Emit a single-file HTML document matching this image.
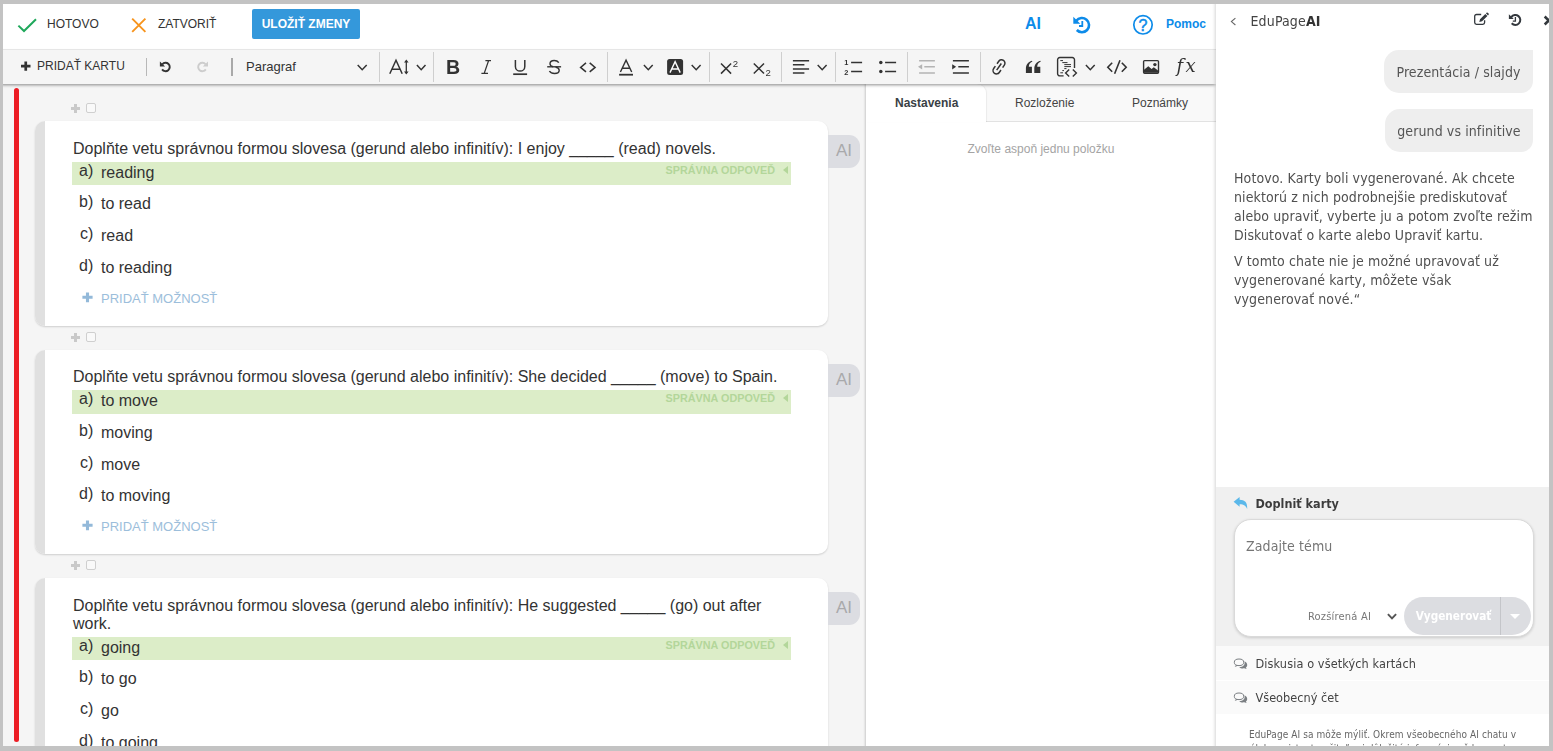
<!DOCTYPE html>
<html lang="sk">
<head>
<meta charset="utf-8">
<title>EduPage – karty</title>
<style>
html,body{margin:0;padding:0;}
body{width:1553px;height:751px;overflow:hidden;background:#fff;font-family:"Liberation Sans",sans-serif;color:#333;}
#frame{position:relative;width:1553px;height:751px;overflow:hidden;background:#fff;}
.abs{position:absolute;}
.bd{position:absolute;background:#c3c3c3;z-index:100;}
/* top bar */
#topbar{position:absolute;left:0;top:0;width:1216px;height:49px;background:#fff;}
.tbtxt{position:absolute;font-size:12px;line-height:14px;color:#333;white-space:nowrap;}
#save{position:absolute;left:252px;top:9px;width:108px;height:30px;background:#3498db;border-radius:2px;color:#fff;font-weight:bold;font-size:12px;line-height:30px;text-align:center;white-space:nowrap;}
/* toolbar */
#toolbar{position:absolute;left:0;top:49px;width:1216px;height:35px;background:#f5f5f5;border-top:1px solid #e6e6e6;box-sizing:border-box;box-shadow:0 2px 3px -1px rgba(0,0,0,.45);z-index:5;}
.sep{position:absolute;width:1px;background:#cfcfcf;top:52px;height:30px;z-index:6;}
.sep.s{top:58px;height:18px;background:#b8b8b8;}
.ico{position:absolute;z-index:6;overflow:visible;}
/* cards area */
#cards{position:absolute;left:0;top:84px;width:866px;height:667px;background:#f5f5f5;}
#redline{position:absolute;left:14px;top:88px;width:5px;height:654px;border-radius:3px;background:#ec1c24;}
.card{position:absolute;left:35px;width:793px;height:204.5px;background:#fff;border-radius:10px;box-shadow:0 1px 2px rgba(0,0,0,.16);}
.card .handle{position:absolute;left:0;top:0;width:10px;height:100%;background:#e0e0e0;border-radius:10px 0 0 10px;}
.card .q{position:absolute;left:38px;top:18.7px;width:720px;font-size:16px;line-height:18.2px;color:#333;}
.row{position:absolute;left:37px;width:719px;height:23px;}
.row.ok{background:#dcedc8;}
.row .lb{position:absolute;left:0;width:21.3px;text-align:right;top:0px;font-size:16px;line-height:18px;white-space:nowrap;}
.row .tx{position:absolute;left:29px;top:2px;font-size:16px;line-height:18px;white-space:nowrap;}
.row .sp{position:absolute;right:16px;top:2px;font-size:10.8px;line-height:13px;font-weight:bold;color:#b3d69a;white-space:nowrap;}
.row .tri{position:absolute;right:3px;top:4px;width:0;height:0;border-top:4px solid transparent;border-bottom:4px solid transparent;border-right:5.5px solid #b3d69a;}
.addopt{position:absolute;left:66px;font-size:13px;line-height:15px;color:#9cbedb;white-space:nowrap;}
.aitab{position:absolute;left:828px;width:32px;height:33px;background:#dcdde2;border-radius:0 11px 11px 0;color:#a9a9ab;font-size:17px;line-height:32px;text-align:center;}
.plus{position:absolute;left:71px;width:9px;height:9px;}
.plus:before{content:"";position:absolute;left:0;top:3px;width:9px;height:3px;background:#c9c9c9;}
.plus:after{content:"";position:absolute;left:3px;top:0;width:3px;height:9px;background:#c9c9c9;}
.cbx{position:absolute;left:86px;width:8px;height:8px;border:1px solid #cfcfcf;border-radius:2px;background:#f9f9f9;}
/* settings panel */
#settings{position:absolute;left:866px;top:84px;width:350px;height:667px;background:#fff;box-shadow:-1px 0 2px rgba(0,0,0,.18);}
#tabbar{position:absolute;left:0;top:0;width:350px;height:37px;background:#f9f9f9;border-bottom:1px solid #e2e2e2;}
#tab1{position:absolute;left:0;top:0;width:120px;height:38px;background:#fff;border-radius:0 9px 0 0;box-shadow:1px 0 1px rgba(0,0,0,.06);}
.tabt{position:absolute;top:12px;font-size:12px;line-height:14px;color:#444;white-space:nowrap;}
/* AI panel */
#ai{position:absolute;left:1216px;top:0;width:337px;height:751px;background:#fff;box-shadow:-1px 0 3px rgba(0,0,0,.17);z-index:10;font-family:"DejaVu Sans Condensed","DejaVu Sans","Liberation Sans",sans-serif;color:#555;}
#ai .t{position:absolute;white-space:nowrap;filter:grayscale(1);}
.bubble{filter:grayscale(1);position:absolute;background:#eee;border-radius:15px 0 12px 15px;font-size:14px;letter-spacing:.1px;color:#555;white-space:nowrap;text-align:center;}
</style>
</head>
<body>
<div id="frame">
<!-- frame borders -->
<div class="bd" style="left:0;top:0;width:1553px;height:4px"></div>
<div class="bd" style="left:0;top:0;width:3px;height:751px"></div>
<div class="bd" style="left:1549px;top:0;width:4px;height:751px"></div>
<div class="bd" style="left:0;top:746px;width:1553px;height:5px"></div>

<div id="topbar">
<svg class="ico" style="left:16px;top:16px" width="24" height="18" viewBox="0 0 24 18"><polyline points="2.4,9.6 8,15 20,3.2" fill="none" stroke="#1fa85b" stroke-width="2"/></svg>
<div class="tbtxt" style="left:47px;top:17px">HOTOVO</div>
<svg class="ico" style="left:130px;top:16px" width="18" height="18" viewBox="0 0 18 18"><path d="M2.2 2.6 L15.4 15.8 M15.4 2.6 L2.2 15.8" fill="none" stroke="#f7941d" stroke-width="1.9"/></svg>
<div class="tbtxt" style="left:158px;top:17px">ZATVORIŤ</div>
<div id="save">ULOŽIŤ ZMENY</div>
<div class="tbtxt" style="left:1025px;top:15.2px;font-size:16px;line-height:18px;font-weight:bold;color:#0d8be9">AI</div>
<svg class="ico" style="left:1072px;top:15px" width="20" height="20" viewBox="0 0 20 20"><path d="M4.3 5.8 A7.1 7.1 0 1 1 4.8 15" fill="none" stroke="#0d8be9" stroke-width="2.6"/><path d="M1.3 1.8 L1.3 8.8 L8.3 8.8 Z" fill="#0d8be9"/><path d="M10.3 6 V11 H7" fill="none" stroke="#0d8be9" stroke-width="1.8"/></svg>
<svg class="ico" style="left:1132px;top:14px" width="22" height="22" viewBox="0 0 22 22"><circle cx="11" cy="10.8" r="9.2" fill="none" stroke="#0d8be9" stroke-width="1.7"/><text x="11" y="16.5" text-anchor="middle" font-family="Liberation Sans, sans-serif" font-size="16" fill="#0d8be9" stroke="#0d8be9" stroke-width="0.5">?</text></svg>
<div class="tbtxt" style="left:1166px;top:17px;font-weight:bold;color:#0d8be9">Pomoc</div>
</div>
<div id="toolbar"></div>
<div class="sep s" style="left:146px"></div>
<div class="sep s" style="left:231px;width:2px;background:#a9a9a9"></div>
<div class="sep" style="left:379px"></div>
<div class="sep" style="left:433px"></div>
<div class="sep" style="left:607px"></div>
<div class="sep" style="left:709px"></div>
<div class="sep" style="left:781px"></div>
<div class="sep" style="left:835px"></div>
<div class="sep" style="left:907px"></div>
<div class="sep" style="left:980px"></div>
<div class="tbtxt" style="left:37px;top:59px;z-index:6">PRIDAŤ KARTU</div>
<div class="tbtxt" style="left:246px;top:58.6px;font-size:13px;line-height:16px;z-index:6">Paragraf</div>
<svg class="ico" style="left:0;top:49px;filter:grayscale(1)" width="1216" height="36" viewBox="0 49 1216 36">
<path d="M25.75 61.5 V70.8 M21 66.15 H30.5" stroke="#2f3338" stroke-width="2.7" fill="none"/>
<path d="M162.3 64.3 A4.2 4.2 0 1 1 162.1 69.4" fill="none" stroke="#2f3338" stroke-width="1.9"/><path d="M159.9 61.4 V66.6 H165.1 Z" fill="#2f3338"/>
<path d="M205.6 64.3 A4.2 4.2 0 1 0 205.8 69.4" fill="none" stroke="#cdcdcd" stroke-width="1.9"/><path d="M208 61.4 V66.6 H202.8 Z" fill="#cdcdcd"/>
<polyline points="357.7,65.1 362.2,69.7 366.7,65.1" fill="none" stroke="#333" stroke-width="1.5"/>
<polyline points="416.9,65.1 421.2,69.7 425.5,65.1" fill="none" stroke="#333" stroke-width="1.5"/>
<polyline points="643.9,65.1 648.3,69.7 652.7,65.1" fill="none" stroke="#333" stroke-width="1.5"/>
<polyline points="691.7,65.1 696.2,69.7 700.6,65.1" fill="none" stroke="#333" stroke-width="1.5"/>
<polyline points="817.7,65.1 822.2,69.7 826.6,65.1" fill="none" stroke="#333" stroke-width="1.5"/>
<polyline points="1085.9,65.1 1090.3,69.7 1094.7,65.1" fill="none" stroke="#333" stroke-width="1.5"/>
<path d="M389.8 73.7 L396 60.3 L402.2 73.7 M391.9 69.2 H400.1" fill="none" stroke="#333" stroke-width="1.5"/>
<path d="M406.3 61 V73.3" stroke="#333" stroke-width="1.3" fill="none"/><path d="M404 62.6 L406.3 59.6 L408.6 62.6 Z M404 71.6 L406.3 74.6 L408.6 71.6 Z" fill="#333"/>
<text x="446" y="74" font-family="Liberation Sans, sans-serif" font-weight="bold" font-size="19.6" fill="#333">B</text>
<path d="M488.6 60.6 L484.2 73.4 M485.4 60.6 H491 M481.4 73.4 H488" fill="none" stroke="#333" stroke-width="1.3"/>
<path d="M515.4 60 V66.4 A4.7 4.7 0 0 0 524.8 66.4 V60" fill="none" stroke="#333" stroke-width="1.5"/><path d="M513.2 74.2 H527.1" stroke="#333" stroke-width="1.7"/>
<path d="M558.8 62.6 C557.6 60.9 555.9 60.5 554.2 60.5 C551.6 60.5 550 61.9 550 63.8 C550 65.4 551 66.3 553 66.8 M555.6 67 C558 67.7 559.2 68.6 559.2 70.3 C559.2 72.3 557.4 73.5 554.6 73.5 C552.4 73.5 550.4 72.7 549.4 71" fill="none" stroke="#333" stroke-width="1.4"/><path d="M547.2 66.8 H561.1" stroke="#333" stroke-width="1.4"/>
<path d="M586 62.9 L580.6 67.4 L586 71.9 M589.7 62.9 L595.1 67.4 L589.7 71.9" fill="none" stroke="#333" stroke-width="1.5"/>
<path d="M620.4 72 L626.05 60.2 L631.7 72 M622.4 68.2 H629.7" fill="none" stroke="#333" stroke-width="1.4"/><path d="M619.1 74.7 H633" stroke="#333" stroke-width="1.8"/>
<rect x="667.1" y="58.9" width="16" height="16.1" rx="2.5" fill="#333"/><path d="M670 72.6 L675.1 61.6 L680.2 72.6 M671.8 69 H678.4" fill="none" stroke="#fff" stroke-width="1.4"/>
<path d="M721 63.5 L731.1 73.6 M731.1 63.5 L721 73.6" stroke="#333" stroke-width="1.5"/><text x="732.8" y="66.9" font-family="Liberation Sans, sans-serif" font-size="9.6" fill="#333">2</text>
<path d="M753.8 63.5 L764 73.5 M764 63.5 L753.8 73.5" stroke="#333" stroke-width="1.5"/><text x="765.4" y="76.2" font-family="Liberation Sans, sans-serif" font-size="9.6" fill="#333">2</text>
<path d="M792.9 60.7 H809.1 M792.9 64.8 H804.4 M792.9 68.9 H809.1 M792.9 73 H804.4" stroke="#333" stroke-width="1.5"/>
<text x="844.2" y="65" font-family="Liberation Sans, sans-serif" font-weight="bold" font-size="7.4" fill="#333">1</text><text x="844.2" y="74.9" font-family="Liberation Sans, sans-serif" font-weight="bold" font-size="7.4" fill="#333">2</text><path d="M851.1 62.5 H862.1 M851.1 71.4 H862.1" stroke="#333" stroke-width="1.5"/>
<circle cx="880.8" cy="62.5" r="1.75" fill="#333"/><circle cx="880.8" cy="71.4" r="1.75" fill="#333"/><path d="M885.1 62.5 H896.1 M885.1 71.4 H896.1" stroke="#333" stroke-width="1.5"/>
<path d="M919.1 60.7 H934.9 M924.3 66.8 H934.9 M919.1 73 H934.9" stroke="#b4b4b4" stroke-width="1.5"/><path d="M918 66.8 L922.2 64.2 V69.4 Z" fill="#b4b4b4"/>
<path d="M952.9 60.7 H968.9 M958.3 66.8 H968.9 M952.9 73 H968.9" stroke="#333" stroke-width="1.5"/><path d="M956.1 66.8 L952.2 64.2 V69.4 Z" fill="#333"/>
<g transform="rotate(35 999 66.85)" fill="none" stroke="#333" stroke-width="1.5"><path d="M995.6 65.4 V62.4 A3.4 3.4 0 0 1 1002.4 62.4 V65.4 M995.6 68.3 V71.3 A3.4 3.4 0 0 0 1002.4 71.3 V68.3 M999 62.8 V70.9"/></g>
<path d="M1025.9 73 h6 v-6.2 h-3.1 c0.1 -2.6 1.2 -4.2 3.6 -5.3 l-0.5 -0.7 c-3.9 1.2 -6 4 -6 8 z M1034.3 73 h6 v-6.2 h-3.1 c0.1 -2.6 1.2 -4.2 3.6 -5.3 l-0.5 -0.7 c-3.9 1.2 -6 4 -6 8 z" fill="#333"/>
<path d="M1063.6 75.9 H1059.8 A2.2 2.2 0 0 1 1057.6 73.7 V59.7 A2.2 2.2 0 0 1 1059.8 57.5 H1072.3 A2.2 2.2 0 0 1 1074.5 59.7 V68" fill="none" stroke="#333" stroke-width="1.4"/>
<path d="M1060.3 60.6 H1063 M1062.3 62.6 H1067.5 M1064.3 64.6 H1071 M1064.3 66.6 H1071 M1064.3 68.6 H1066.5 M1062.3 70.6 H1064 M1060.3 72.8 H1063" stroke="#333" stroke-width="1"/>
<path d="M1069.2 69.4 L1065.6 72.9 L1069.2 76.4 M1072.8 69.4 L1076.4 72.9 L1072.8 76.4" fill="none" stroke="#333" stroke-width="1.4"/>
<path d="M1112.2 62.7 L1107.8 67.2 L1112.2 71.7 M1120 60.2 L1114.6 73.8 M1121.8 62.7 L1126.2 67.2 L1121.8 71.7" fill="none" stroke="#333" stroke-width="1.6"/>
<rect x="1143.6" y="60.6" width="14.9" height="12.6" rx="1" fill="none" stroke="#333" stroke-width="1.4"/><path d="M1144 72.8 V69.8 L1148.3 66.2 L1151.6 69 L1153.8 67.3 L1158 70.6 V72.8 Z" fill="#333"/><circle cx="1154.9" cy="64.6" r="1.7" fill="#333"/>
<text x="1176.4" y="72.2" font-family="DejaVu Serif, Liberation Serif, serif" font-style="italic" font-size="18" letter-spacing="2.4" fill="#333">fx</text>
</svg>
<div id="cards">
<div id="redline" style="top:4px"></div>
<div class="plus" style="top:19.8px"></div><div class="cbx" style="top:19.2px"></div>
<div class="card" style="top:37.0px"><div class="handle"></div>
<div class="q">Doplňte vetu správnou formou slovesa (gerund alebo infinitív): I enjoy _____ (read) novels.</div>
<div class="row ok" style="top:41.2px"><span class="lb">a)</span><span class="tx">reading</span><span class="sp">SPRÁVNA ODPOVEĎ</span><span class="tri"></span></div>
<div class="row" style="top:72.0px"><span class="lb">b)</span><span class="tx">to read</span></div>
<div class="row" style="top:103.8px"><span class="lb">c)</span><span class="tx">read</span></div>
<div class="row" style="top:135.8px"><span class="lb">d)</span><span class="tx">to reading</span></div>
<div class="addopt" style="left:66px;top:170.1px">PRIDAŤ MOŽNOSŤ</div><svg class="ico" style="left:47px;top:171.3px" width="11" height="11" viewBox="0 0 11 11"><path d="M5.5 0.4 V10.2 M0.4 5.3 H10.6" stroke="#93b9d9" stroke-width="3.1" fill="none"/></svg>
</div>
<div class="aitab" style="top:51.0px">AI</div>
<div class="plus" style="top:248.7px"></div><div class="cbx" style="top:248.2px"></div>
<div class="card" style="top:265.6px"><div class="handle"></div>
<div class="q">Doplňte vetu správnou formou slovesa (gerund alebo infinitív): She decided _____ (move) to Spain.</div>
<div class="row ok" style="top:40.5px;height:23.9px"><span class="lb">a)</span><span class="tx">to move</span><span class="sp">SPRÁVNA ODPOVEĎ</span><span class="tri"></span></div>
<div class="row" style="top:72.0px"><span class="lb">b)</span><span class="tx">moving</span></div>
<div class="row" style="top:104.2px"><span class="lb">c)</span><span class="tx">move</span></div>
<div class="row" style="top:135.8px"><span class="lb">d)</span><span class="tx">to moving</span></div>
<div class="addopt" style="left:66px;top:169.2px">PRIDAŤ MOŽNOSŤ</div><svg class="ico" style="left:47px;top:170.4px" width="11" height="11" viewBox="0 0 11 11"><path d="M5.5 0.4 V10.2 M0.4 5.3 H10.6" stroke="#93b9d9" stroke-width="3.1" fill="none"/></svg>
</div>
<div class="aitab" style="top:279.6px">AI</div>
<div class="plus" style="top:476.7px"></div><div class="cbx" style="top:476.4px"></div>
<div class="card" style="top:494.2px"><div class="handle"></div>
<div class="q">Doplňte vetu správnou formou slovesa (gerund alebo infinitív): He suggested _____ (go) out after<br>work.</div>
<div class="row ok" style="top:58.9px"><span class="lb">a)</span><span class="tx">going</span><span class="sp">SPRÁVNA ODPOVEĎ</span><span class="tri"></span></div>
<div class="row" style="top:89.7px"><span class="lb">b)</span><span class="tx">to go</span></div>
<div class="row" style="top:121.5px"><span class="lb">c)</span><span class="tx">go</span></div>
<div class="row" style="top:153.5px"><span class="lb">d)</span><span class="tx">to going</span></div>
<div class="addopt" style="left:66px;top:188.3px">PRIDAŤ MOŽNOSŤ</div><svg class="ico" style="left:47px;top:189.5px" width="11" height="11" viewBox="0 0 11 11"><path d="M5.5 0.4 V10.2 M0.4 5.3 H10.6" stroke="#93b9d9" stroke-width="3.1" fill="none"/></svg>
</div>
<div class="aitab" style="top:507.8px">AI</div>
</div>
<div id="settings">
<div id="tabbar"></div>
<div id="tab1"></div>
<div class="tabt" style="left:29px;font-weight:bold;color:#3a3f45">Nastavenia</div>
<div class="tabt" style="left:149px">Rozloženie</div>
<div class="tabt" style="left:266px">Poznámky</div>
<div class="tabt" style="left:0;width:350px;text-align:center;top:58px;color:#a4a4a4">Zvoľte aspoň jednu položku</div>
</div>
<div id="ai">
<svg class="ico" style="left:13px;top:16px" width="10" height="12" viewBox="0 0 10 12"><polyline points="6.4,2.2 2.4,5.6 6.4,9" fill="none" stroke="#666" stroke-width="1.1"/></svg>
<div class="t" style="left:34.5px;top:11.8px;font-size:14px;line-height:18px;color:#444;letter-spacing:.15px">EduPage<b style="color:#333">AI</b></div>
<svg class="ico" style="left:257px;top:11.4px" width="17" height="15" viewBox="0 0 17 15"><path d="M8.2 3.5 H3.5 A1.8 1.8 0 0 0 1.7 5.3 V11.5 A1.8 1.8 0 0 0 3.5 13.3 H9.8 A1.8 1.8 0 0 0 11.6 11.5 V9.2" fill="none" stroke="#33383d" stroke-width="1.3"/><path d="M6.3 11 L7 8.2 L12.3 2.9 L14.4 5 L9.1 10.3 Z M12.9 2.3 L13.5 1.7 A0.9 0.9 0 0 1 14.7 1.7 L15.6 2.6 A0.9 0.9 0 0 1 15.6 3.8 L15 4.4 Z" fill="#33383d"/></svg>
<svg class="ico" style="left:291px;top:12px" width="16" height="16" viewBox="0 0 16 16"><path d="M4.3 5.1 A4.95 4.95 0 1 1 4.7 11.3" fill="none" stroke="#33383d" stroke-width="2"/><path d="M1.9 2.2 V7 H6.7 Z" fill="#33383d"/><path d="M8.4 5.1 V9.1 H5.8" fill="none" stroke="#33383d" stroke-width="1.3"/></svg>
<svg class="ico" style="left:326px;top:13px" width="12" height="14" viewBox="0 0 12 14"><path d="M2.7 3.5 L10.7 11.5 M10.7 3.5 L2.7 11.5" stroke="#33383d" stroke-width="2.5" fill="none"/></svg>

<div class="bubble" style="left:168px;top:50px;width:149px;height:43px;line-height:44px">Prezentácia / slajdy</div>
<div class="bubble" style="left:169px;top:109px;width:148px;height:43px;line-height:44px">gerund vs infinitive</div>

<div class="t" style="left:18px;top:169px;font-size:14px;line-height:19px;letter-spacing:.1px;color:#505050">Hotovo. Karty boli vygenerované. Ak chcete<br>niektorú z nich podrobnejšie prediskutovať<br>alebo upraviť, vyberte ju a potom zvoľte režim<br>Diskutovať o karte alebo Upraviť kartu.</div>
<div class="t" style="left:18px;top:252px;font-size:14px;line-height:19px;letter-spacing:.1px;color:#505050">V tomto chate nie je možné upravovať už<br>vygenerované karty, môžete však<br>vygenerovať nové.“</div>

<div class="abs" style="left:0;top:487px;width:337px;height:159px;background:#f0f0f0"></div>
<svg class="ico" style="left:17px;top:496px" width="16" height="14" viewBox="0 0 16 14"><path d="M0.6 5.8 L6.6 0.9 V3.7 C11.6 3.8 14.6 6.2 14.2 12.9 C13 10 11 8.3 6.6 8.2 V10.8 Z" fill="#5bb8ea"/></svg>
<div class="t" style="left:39.5px;top:495px;font-size:12.5px;line-height:18px;font-weight:bold;color:#383d42">Doplniť karty</div>
<div class="abs" style="left:17.5px;top:518.8px;width:298px;height:116.6px;background:#fff;border:1px solid #dadada;border-radius:17px;box-shadow:0 1px 3px rgba(0,0,0,.16)"></div>
<div class="t" style="left:30px;top:537px;font-size:14px;line-height:18px;letter-spacing:.1px;color:#757575">Zadajte tému</div>
<div class="t" style="left:92px;top:609.3px;font-size:11px;line-height:15px;letter-spacing:.2px;color:#777">Rozšírená AI</div>
<svg class="ico" style="left:170px;top:611px" width="12" height="11" viewBox="0 0 12 11"><polyline points="1.9,3.1 6,7.4 10.1,3.1" fill="none" stroke="#555" stroke-width="1.9"/></svg>
<div class="abs" style="left:188px;top:597px;width:127px;height:37.5px;border-radius:19px;background:#dcdde1"></div>
<div class="abs" style="left:283.5px;top:597px;width:1px;height:37.5px;background:#c4c5c9"></div>
<div class="t" style="left:199.7px;top:607.3px;font-size:11.7px;line-height:18px;font-weight:bold;color:#fff">Vygenerovať</div>
<div class="abs" style="left:293.7px;top:614.3px;width:0;height:0;border-left:5.2px solid transparent;border-right:5.2px solid transparent;border-top:5px solid #fff"></div>

<div class="abs" style="left:0;top:646px;width:337px;height:34px;background:#fafafa"></div>
<div class="abs" style="left:0;top:681px;width:337px;height:33px;background:#fafafa"></div>
<svg class="ico" style="left:17px;top:658px" width="15" height="12" viewBox="0 0 15 12"><ellipse cx="6" cy="4.3" rx="4.7" ry="3.3" fill="none" stroke="#7b7f83" stroke-width="1"/><path d="M3 7 L1.7 8.9 L4.9 7.8 Z" fill="#7b7f83"/><path d="M11.4 3.3 C13.2 4 14.2 5.4 14.2 7 C14.2 8 13.7 8.9 12.9 9.5 L13.6 11.1 L11.2 10.3 C9.4 10.7 7.4 10.3 6.2 9.2 C10 9.2 12.5 7 11.4 3.3 Z" fill="#7b7f83"/></svg>
<div class="t" style="left:39.5px;top:654.6px;font-size:12.6px;line-height:18px;letter-spacing:.1px;color:#444">Diskusia o všetkých kartách</div>
<svg class="ico" style="left:17px;top:692px" width="15" height="12" viewBox="0 0 15 12"><ellipse cx="6" cy="4.3" rx="4.7" ry="3.3" fill="none" stroke="#7b7f83" stroke-width="1"/><path d="M3 7 L1.7 8.9 L4.9 7.8 Z" fill="#7b7f83"/><path d="M11.4 3.3 C13.2 4 14.2 5.4 14.2 7 C14.2 8 13.7 8.9 12.9 9.5 L13.6 11.1 L11.2 10.3 C9.4 10.7 7.4 10.3 6.2 9.2 C10 9.2 12.5 7 11.4 3.3 Z" fill="#7b7f83"/></svg>
<div class="t" style="left:39.5px;top:688.6px;font-size:12.6px;line-height:18px;color:#444">Všeobecný čet</div>
<div class="t" style="left:0;width:333px;text-align:center;top:727.6px;font-size:10px;line-height:14.6px;letter-spacing:.08px;color:#666">EduPage AI sa môže mýliť. Okrem všeobecného AI chatu v<br>úlohe asistenta učiteľa si dôležité informácie vždy overte.</div>
</div>
</div>
</body>
</html>
